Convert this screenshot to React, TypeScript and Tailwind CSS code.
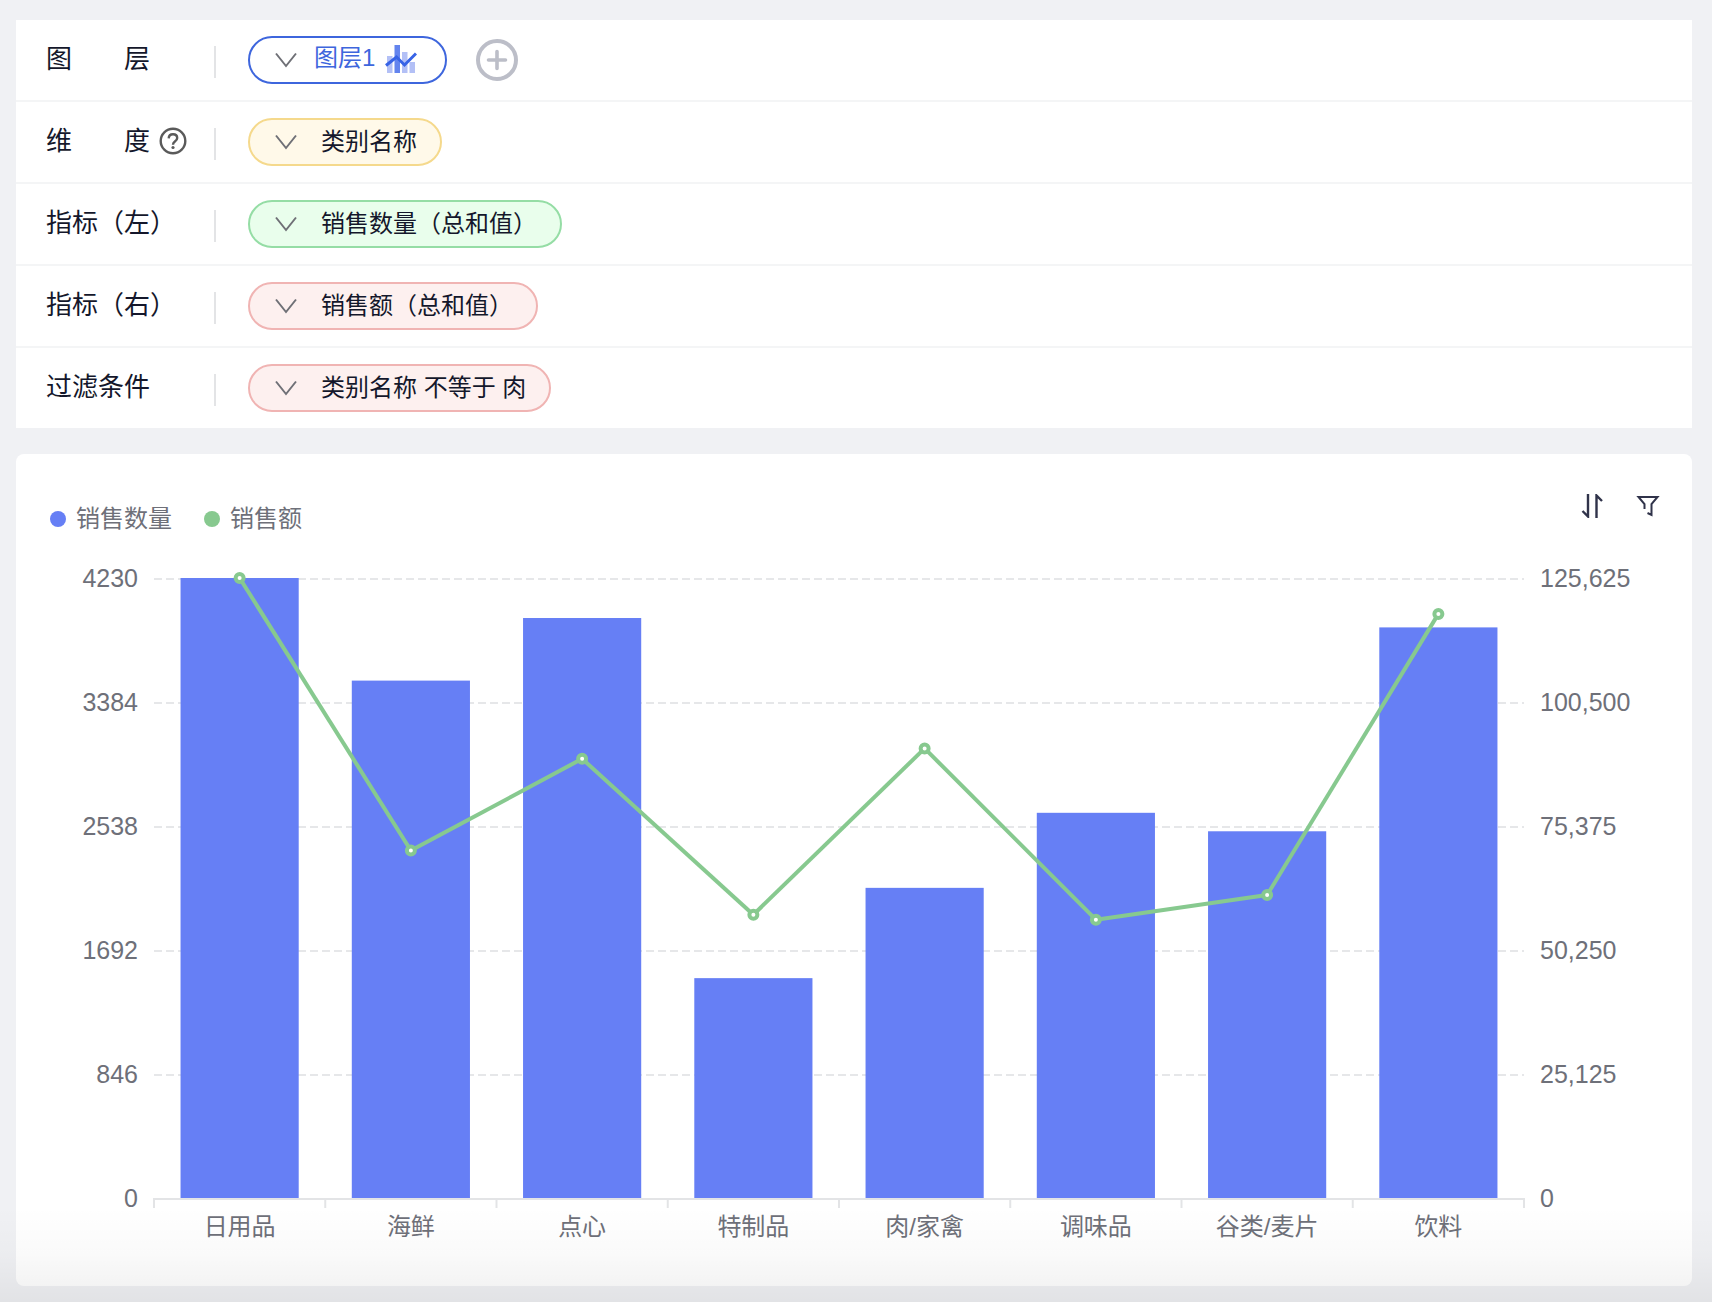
import type { ReactNode } from "react";

const PLOT_HEIGHT = 620;
const PLOT_TOP = 12;

const leftTicks = ["4230", "3384", "2538", "1692", "846", "0"];
const rightTicks = ["125,625", "100,500", "75,375", "50,250", "25,125", "0"];

const data = [
  { name: "日用品", count: 4230, amount: 125625 },
  { name: "海鲜", count: 3530, amount: 70400 },
  { name: "点心", count: 3957, amount: 89000 },
  { name: "特制品", count: 1500, amount: 57400 },
  { name: "肉/家禽", count: 2116, amount: 91100 },
  { name: "调味品", count: 2628, amount: 56400 },
  { name: "谷类/麦片", count: 2502, amount: 61400 },
  { name: "饮料", count: 3893, amount: 118350 },
];

const yCount = (v: number) => PLOT_TOP + PLOT_HEIGHT * (1 - v / 4230);
const yAmount = (v: number) => PLOT_TOP + PLOT_HEIGHT * (1 - v / 125625);
const xCenter = (i: number) => `${((i + 0.5) / data.length) * 100}%`;

function Chevron() {
  return (
    <svg className="h-4 w-6 shrink-0" viewBox="0 0 24 16" fill="none" stroke="#6f7076" strokeWidth="2" aria-hidden="true">
      <path d="M2 1.500 12 14 22 1.500" />
    </svg>
  );
}

function ComboIcon() {
  return (
    <svg className="h-8 w-8 shrink-0" viewBox="0 0 32 32" aria-hidden="true">
      <g fill="#b3c0f6">
        <rect x="2" y="12" width="5.500" height="17" />
        <rect x="17" y="8" width="5.500" height="21" />
        <rect x="24.500" y="18" width="5.500" height="11" />
      </g>
      <rect x="9.500" y="1" width="5.500" height="28" fill="#6384ee" />
      <path d="M1 21.500 11.500 13 19.500 21 31 9.500" fill="none" stroke="#3763e6" strokeWidth="3" />
    </svg>
  );
}

function Row({ label, children }: { label: ReactNode; children: ReactNode }) {
  return (
    <div className="flex h-[82px] items-center border-b-2 border-[#f4f5f6] pl-[30px] last:h-20 last:border-b-0">
      <div className="flex w-[168px] shrink-0 items-center pb-0.5 text-[26px] leading-8 text-[#14172b]">{label}</div>
      <div className="mt-1 h-8 w-0.5 shrink-0 bg-[#e3e4e6]" />
      <div className="ml-8 flex items-center">{children}</div>
    </div>
  );
}

function Spread({ a, b }: { a: string; b: string }) {
  return (
    <span className="flex w-[104px] justify-between">
      <span>{a}</span>
      <span>{b}</span>
    </span>
  );
}

function Chip({ tone, children }: { tone: string; children: ReactNode }) {
  return (
    <button
      type="button"
      className={`flex h-12 items-center rounded-full border-2 pr-[23px] pl-6 text-2xl leading-8 whitespace-nowrap text-[#14172b] ${tone}`}
    >
      <Chevron />
      <span className="ml-[23px]">{children}</span>
    </button>
  );
}

function Legend({ color, children }: { color: string; children: ReactNode }) {
  return (
    <li className="flex items-center gap-2.5">
      <span className={`h-4 w-4 rounded-full ${color}`} />
      {children}
    </li>
  );
}

function Plot() {
  return (
    <svg className="h-[644px] w-full overflow-visible" role="img" aria-label="销售数量与销售额">
      {leftTicks.slice(0, 5).map((t, i) => (
        <line key={t} x1="0" x2="100%" y1={13 + i * 124} y2={13 + i * 124} stroke="#e6e7e9" strokeWidth="2" strokeDasharray="8 4" />
      ))}
      <line x1="0" x2="100%" y1="633" y2="633" stroke="#e3e4e6" strokeWidth="2" />
      {Array.from({ length: 9 }, (_, i) => (
        <line key={i} x1={`${i * 12.5}%`} x2={`${i * 12.5}%`} y1="632" y2="642" stroke="#e3e4e6" strokeWidth="2" />
      ))}
      {data.map((d, i) => (
        <rect key={d.name} x={`${(i + 0.155) * 12.5}%`} y={yCount(d.count)} width="8.625%" height={PLOT_TOP + PLOT_HEIGHT - yCount(d.count)} fill="#667ff5" />
      ))}
      {data.slice(1).map((d, i) => (
        <line
          key={d.name}
          x1={xCenter(i)}
          y1={yAmount(data[i].amount)}
          x2={xCenter(i + 1)}
          y2={yAmount(d.amount)}
          stroke="#87c98f"
          strokeWidth="4"
        />
      ))}
      {data.map((d, i) => (
        <circle key={d.name} cx={xCenter(i)} cy={yAmount(d.amount)} r="4" fill="#fff" stroke="#87c98f" strokeWidth="4" />
      ))}
    </svg>
  );
}

export default function App() {
  return (
    <div className="relative min-h-screen bg-[#f0f1f4] pt-5 pr-5 pb-4 pl-4 font-['Liberation_Sans','Noto_Sans_CJK_SC',sans-serif]">
      <section className="bg-white">
        <Row label={<Spread a="图" b="层" />}>
          <button
            type="button"
            className="flex h-12 items-center rounded-full border-2 border-[#3e66dd] bg-white pr-7 pl-6 text-2xl leading-8 whitespace-nowrap text-[#3e66dd]"
          >
            <Chevron />
            <span className="ml-4 flex items-center gap-2.5">
              <span className="pb-1">图层1</span>
              <ComboIcon />
            </span>
          </button>
          <button type="button" aria-label="添加图层" className="ml-[29px]">
            <svg className="h-[42px] w-[42px]" viewBox="0 0 42 42" fill="none" stroke="#bcbec8" aria-hidden="true">
              <circle cx="21" cy="21" r="19" strokeWidth="4" />
              <path d="M21 12.500v17M12.500 21h17" strokeWidth="3.600" strokeLinecap="round" />
            </svg>
          </button>
        </Row>
        <Row
          label={
            <>
              <Spread a="维" b="度" />
              <button type="button" aria-label="帮助" className="ml-[9px]">
                <svg className="h-7 w-7" viewBox="0 0 28 28" fill="none" stroke="#5a5a5a" strokeWidth="2.400" aria-hidden="true">
                  <circle cx="14" cy="14" r="12.300" />
                  <path d="M9.700 11.400C9.800 8.800 11.600 7.300 14 7.300c2.500 0 4.200 1.500 4.200 3.700 0 1.700-.9 2.600-2.300 3.600-1.400 1-1.900 1.600-1.900 3.200" />
                  <circle cx="14" cy="20.500" r="1.600" fill="#5a5a5a" stroke="none" />
                </svg>
              </button>
            </>
          }
        >
          <Chip tone="border-[#f5d98c] bg-[#fff9e9]">类别名称</Chip>
        </Row>
        <Row label="指标（左）">
          <Chip tone="border-[#95dda5] bg-[#e9feec]">销售数量（总和值）</Chip>
        </Row>
        <Row label="指标（右）">
          <Chip tone="border-[#f0b4b3] bg-[#fdf0ef]">销售额（总和值）</Chip>
        </Row>
        <Row label="过滤条件">
          <Chip tone="border-[#f0b4b3] bg-[#fdf0ef]">类别名称 不等于 肉</Chip>
        </Row>
      </section>

      <section className="mt-[26px] rounded-lg bg-white pb-[42px] text-[#6e7079]">
        <header className="flex h-28 items-start justify-between pt-10 pr-8 pl-[34px]">
          <ul className="mt-[9px] flex gap-8 text-2xl leading-8">
            <Legend color="bg-[#667ff5]">销售数量</Legend>
            <Legend color="bg-[#87c98f]">销售额</Legend>
          </ul>
          <div className="flex gap-8">
            <button type="button" aria-label="排序">
              <svg className="h-6 w-6" viewBox="0 0 24 24" fill="none" stroke="#30334a" strokeWidth="2.400" aria-hidden="true">
                <path d="M8 0v22.500L2.500 17M16.500 24V1.500L22 7" />
              </svg>
            </button>
            <button type="button" aria-label="筛选">
              <svg className="h-6 w-6" viewBox="0 0 24 24" fill="none" stroke="#30334a" strokeWidth="2" aria-hidden="true">
                <path d="M8.500 15V10L2.500 3h19l-6 7v11l-4-2" />
              </svg>
            </button>
          </div>
        </header>
        <div className="grid grid-cols-[138px_1fr_168px]">
          <ol className="flex flex-col justify-between pr-4 text-right text-[25px] leading-6">
            {leftTicks.map((t) => (
              <li key={t}>{t}</li>
            ))}
          </ol>
          <Plot />
          <ol className="flex flex-col justify-between pl-4 text-[25px] leading-6">
            {rightTicks.map((t) => (
              <li key={t}>{t}</li>
            ))}
          </ol>
          <ol className="col-start-2 grid grid-cols-8 text-center text-2xl leading-[34px]">
            {data.map((d) => (
              <li key={d.name}>{d.name}</li>
            ))}
          </ol>
        </div>
      </section>
      <div className="pointer-events-none absolute inset-x-0 bottom-0 h-24 bg-linear-to-b from-black/0 via-black/2 to-black/6" />
    </div>
  );
}
